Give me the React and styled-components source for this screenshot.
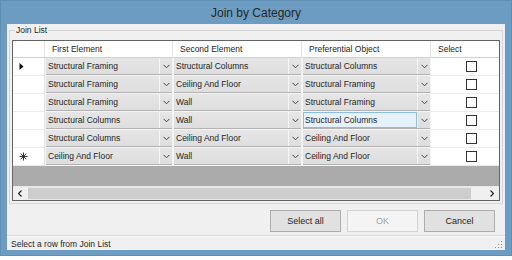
import React from "react"
import styled, { createGlobalStyle } from "styled-components"

const Global = createGlobalStyle`
  html, body {
    margin: 0;
    padding: 0;
    background: #ffffff;
  }
  * {
    box-sizing: border-box;
  }
`

const Page = styled.div`
  width: 512px;
  height: 260px;
  overflow: hidden;
  font-family: "Liberation Sans", Arial, sans-serif;
  font-size: 8.5px;
  color: #1e1e1e;
`

const Window = styled.div`
  width: 512px;
  height: 256px;
  background: #6c9cc1;
  border: 1px solid #5f8fb5;
  padding: 0 6px 5px 6px;
  display: flex;
  flex-direction: column;
`

const TitleBar = styled.div`
  height: 23px;
  display: flex;
  align-items: center;
  justify-content: center;
  font-size: 12px;
  color: #262626;
`

const Client = styled.div`
  flex: 1;
  background: #f0f0f0;
  display: flex;
  flex-direction: column;
`

const GroupBox = styled.fieldset`
  margin: 1px 2px 0 2px;
  padding: 4px 2px 2px 2px;
  border: 1px solid #d5d5d5;
  border-radius: 0;
  min-width: 0;
`

const Legend = styled.legend`
  padding: 0 1px;
  margin-left: 3px;
  line-height: 11px;
  font-size: 8.5px;
`

const Grid = styled.div`
  height: 161px;
  border: 1px solid #646464;
  background: #ababab;
  display: flex;
  flex-direction: column;
  overflow: hidden;
`

const Line = styled.div`
  display: grid;
  grid-template-columns: 32px 128px 129px 129px 80px;
  width: 498px;
  height: ${(p) => p.$h}px;
  flex: none;
`

const HeadCell = styled.div`
  background: #ffffff;
  border-right: 1px solid #e3e3e3;
  border-bottom: 1px solid #d0d0d0;
  padding-left: 7px;
  display: flex;
  align-items: center;
  white-space: nowrap;
`

const RowHead = styled.div`
  background: #ffffff;
  border-right: 1px solid #e3e3e3;
  border-bottom: 1px solid #ececec;
  display: flex;
  align-items: center;
  padding-left: 6px;
  color: #222;
`

const ComboCell = styled.div`
  background: #f4f4f4;
  padding: 0 1px 1px 1px;
  display: flex;
`

const Combo = styled.div`
  flex: 1;
  display: flex;
  background: linear-gradient(#e6e6e6, #dedede);
  border-bottom: 1px solid #b3b3b3;
`

const ComboText = styled.div`
  flex: 1;
  display: flex;
  align-items: center;
  padding-left: 2px;
  white-space: nowrap;
  overflow: hidden;
  ${(p) =>
    p.$focus &&
    `
    border: 1px solid #8cbbe6;
    padding-left: 1px;
    background-image: linear-gradient(to right, #9ab 50%, transparent 50%);
    background-size: 2px 1px;
    background-repeat: repeat-x;
    background-position: 0 14px;
    background-color: #e6f1fb;
  `}
`

const Arrow = styled.div`
  width: 13px;
  border-left: 1px solid #f6f6f6;
  display: flex;
  align-items: center;
  justify-content: center;
`

const CheckCell = styled.div`
  background: #ffffff;
  border-bottom: 1px solid #ececec;
  display: flex;
  align-items: center;
  padding-left: 35px;
`

const Check = styled.div`
  width: 11px;
  height: 11px;
  border: 1px solid #333333;
  background: #ffffff;
`

const Empty = styled.div`
  flex: 1;
  background: #ababab;
`

const HScroll = styled.div`
  height: 14px;
  flex: none;
  display: flex;
  background: #e8e8e8;
  border-top: 1px solid #e8e8e8;
`

const ScrollBtn = styled.div`
  width: ${(p) => p.$w}px;
  display: flex;
  align-items: center;
  justify-content: ${(p) => (p.$end ? "flex-end" : "flex-start")};
  padding: 0 5px;
  background: #f0f0f0;
`

const Thumb = styled.div`
  flex: 1;
  background: #cdcdcd;
  margin: 1px 0;
`

const ButtonBar = styled.div`
  display: flex;
  justify-content: flex-end;
  gap: 6px;
  margin: 6px 10px 0 0;
`

const Button = styled.div`
  width: 71px;
  height: 22px;
  display: flex;
  align-items: center;
  justify-content: center;
  background: ${(p) => (p.$disabled ? "#f4f4f4" : "#e1e1e1")};
  border: 1px solid ${(p) => (p.$disabled ? "#d3d3d3" : "#adadad")};
  color: ${(p) => (p.$disabled ? "#a3a3a3" : "#1e1e1e")};
  font-size: 9px;
`

const Status = styled.div`
  margin-top: 3px;
  flex: 1;
  border-top: 1px solid #d7d7d7;
  box-shadow: inset 0 1px 0 #ffffff;
  display: flex;
  align-items: center;
  padding: 1px 2px 0 4px;
`

const Grip = styled.svg`
  margin-left: auto;
  align-self: flex-end;
  margin-bottom: 1px;
`

const Chevron = () => (
  <svg width="7" height="5" viewBox="0 0 7 5">
    <path d="M0.5 0.8 L3.5 3.8 L6.5 0.8" fill="none" stroke="#444" strokeWidth="1" />
  </svg>
)

const rows = [
  ["Structural Framing", "Structural Columns", "Structural Columns", "current"],
  ["Structural Framing", "Ceiling And Floor", "Structural Framing"],
  ["Structural Framing", "Wall", "Structural Framing"],
  ["Structural Columns", "Wall", "Structural Columns", null, true],
  ["Structural Columns", "Ceiling And Floor", "Ceiling And Floor"],
  ["Ceiling And Floor", "Wall", "Ceiling And Floor", "new"],
]

const Marker = ({ kind }) => {
  if (kind === "current")
    return (
      <svg width="5" height="7" viewBox="0 0 5 7">
        <path d="M0.5 0 L4.5 3.5 L0.5 7 Z" fill="#111" />
      </svg>
    )
  if (kind === "new")
    return (
      <svg width="9" height="9" viewBox="0 0 9 9">
        <g stroke="#333" strokeWidth="1">
          <path d="M4.5 0.5 V8.5 M0.5 4.5 H8.5 M1.7 1.7 L7.3 7.3 M7.3 1.7 L1.7 7.3" />
        </g>
      </svg>
    )
  return null
}

const ComboBox = ({ value, focus }) => (
  <ComboCell>
    <Combo>
      <ComboText $focus={focus}>{value}</ComboText>
      <Arrow>
        <Chevron />
      </Arrow>
    </Combo>
  </ComboCell>
)

export default function App() {
  return (
    <Page>
      <Global />
      <Window>
        <TitleBar>Join by Category</TitleBar>
        <Client>
          <GroupBox>
            <Legend>Join List</Legend>
            <Grid>
              <Line $h={17}>
                <HeadCell />
                <HeadCell>First Element</HeadCell>
                <HeadCell>Second Element</HeadCell>
                <HeadCell>Preferential Object</HeadCell>
                <HeadCell>Select</HeadCell>
              </Line>
              {rows.map(([a, b, c, mark, focus], i) => (
                <Line $h={18} key={i}>
                  <RowHead>
                    <Marker kind={mark} />
                  </RowHead>
                  <ComboBox value={a} />
                  <ComboBox value={b} />
                  <ComboBox value={c} focus={focus} />
                  <CheckCell>
                    <Check />
                  </CheckCell>
                </Line>
              ))}
              <Empty />
              <HScroll>
                <ScrollBtn $w={15}>
                  <svg width="4" height="7" viewBox="0 0 4 7">
                    <path d="M3.5 0.5 L0.5 3.5 L3.5 6.5" fill="none" stroke="#222" strokeWidth="1.2" />
                  </svg>
                </ScrollBtn>
                <Thumb />
                <ScrollBtn $w={28} $end>
                  <svg width="4" height="7" viewBox="0 0 4 7">
                    <path d="M0.5 0.5 L3.5 3.5 L0.5 6.5" fill="none" stroke="#222" strokeWidth="1.2" />
                  </svg>
                </ScrollBtn>
              </HScroll>
            </Grid>
          </GroupBox>
          <ButtonBar>
            <Button>Select all</Button>
            <Button $disabled>OK</Button>
            <Button>Cancel</Button>
          </ButtonBar>
          <Status>
            Select a row from Join List
            <Grip width="8" height="8" viewBox="0 0 8 8">
              <g fill="#8a8a8a">
                <rect x="6" y="0" width="1" height="1" />
                <rect x="3" y="3" width="1" height="1" />
                <rect x="6" y="3" width="1" height="1" />
                <rect x="0" y="6" width="1" height="1" />
                <rect x="3" y="6" width="1" height="1" />
                <rect x="6" y="6" width="1" height="1" />
              </g>
            </Grip>
          </Status>
        </Client>
      </Window>
    </Page>
  )
}
